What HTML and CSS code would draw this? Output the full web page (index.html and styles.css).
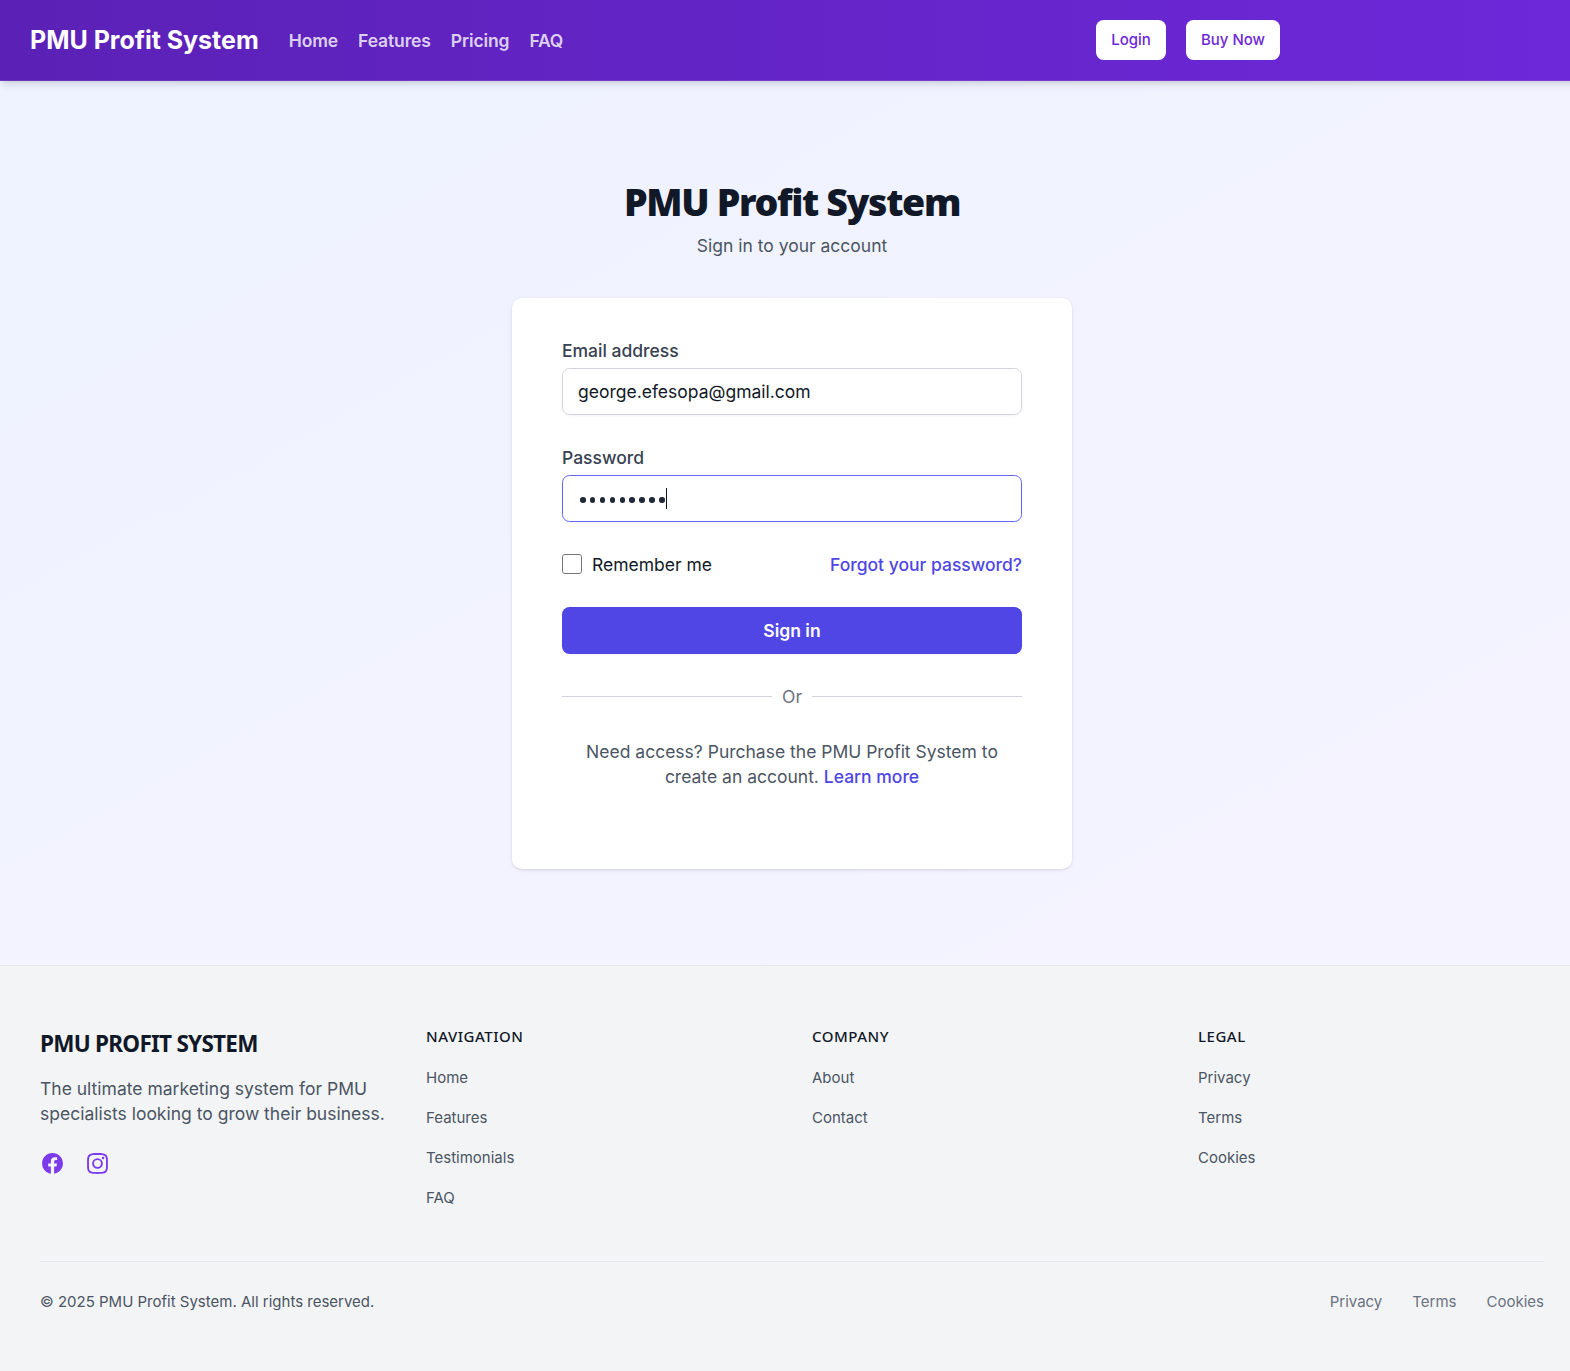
FILE: index.html
```html
<!DOCTYPE html>
<html lang="en">
<head>
<meta charset="utf-8">
<title>PMU Profit System</title>
<link rel="stylesheet" href="styles.css">
</head>
<body>
<div class="page">
  <header class="header">
    <div class="header-inner">
      <a class="brand">PMU Profit System</a>
      <nav class="nav"><a>Home</a><a>Features</a><a>Pricing</a><a>FAQ</a></nav>
      <div class="actions"><a class="action">Login</a><a class="action">Buy Now</a></div>
    </div>
  </header>
  <main class="main">
    <h1 class="title">PMU Profit System</h1>
    <p class="subtitle">Sign in to your account</p>
    <form class="card">
      <div class="field">
        <label class="label">Email address</label>
        <div class="input">george.efesopa@gmail.com</div>
      </div>
      <div class="field">
        <label class="label">Password</label>
        <div class="input focused">
          <span class="dots"><i></i><i></i><i></i><i></i><i></i><i></i><i></i><i></i><i></i></span><span class="caret"></span>
        </div>
      </div>
      <div class="options">
        <span class="remember"><span class="checkbox"></span>Remember me</span>
        <a class="link">Forgot your password?</a>
      </div>
      <div class="submit">Sign in</div>
      <div class="divider"><span class="or">Or</span></div>
      <p class="help">Need access? Purchase the PMU Profit System to<br>create an account. <a class="link">Learn more</a></p>
    </form>
  </main>
  <footer class="footer">
    <div class="columns">
      <section>
        <h3 class="footer-brand">PMU PROFIT SYSTEM</h3>
        <p class="about">The ultimate marketing system for PMU<br>specialists looking to grow their business.</p>
        <div class="social">
          <svg viewBox="0 0 24 24"><path d="M22 12c0-5.523-4.477-10-10-10S2 6.477 2 12c0 4.991 3.657 9.128 8.438 9.878v-6.987h-2.54V12h2.54V9.797c0-2.506 1.492-3.89 3.777-3.89 1.094 0 2.238.195 2.238.195v2.46h-1.26c-1.243 0-1.63.771-1.63 1.562V12h2.773l-.443 2.89h-2.33v6.988C18.343 21.128 22 16.991 22 12z"/></svg>
          <svg viewBox="0 0 24 24"><path fill-rule="evenodd" d="M12.315 2c2.43 0 2.784.013 3.808.06 1.064.049 1.791.218 2.427.465a4.902 4.902 0 011.772 1.153 4.902 4.902 0 011.153 1.772c.247.636.416 1.363.465 2.427.048 1.067.06 1.407.06 4.123v.08c0 2.643-.012 2.987-.06 4.043-.049 1.064-.218 1.791-.465 2.427a4.902 4.902 0 01-1.153 1.772 4.902 4.902 0 01-1.772 1.153c-.636.247-1.363.416-2.427.465-1.067.048-1.407.06-4.123.06h-.08c-2.643 0-2.987-.012-4.043-.06-1.064-.049-1.791-.218-2.427-.465a4.902 4.902 0 01-1.772-1.153 4.902 4.902 0 01-1.153-1.772c-.247-.636-.416-1.363-.465-2.427-.047-1.024-.06-1.379-.06-3.808v-.63c0-2.43.013-2.784.06-3.808.049-1.064.218-1.791.465-2.427a4.902 4.902 0 011.153-1.772A4.902 4.902 0 015.45 2.525c.636-.247 1.363-.416 2.427-.465C8.901 2.013 9.256 2 11.685 2h.63zm-.081 1.802h-.468c-2.456 0-2.784.011-3.807.058-.975.045-1.504.207-1.857.344-.467.182-.8.398-1.15.748-.35.35-.566.683-.748 1.15-.137.353-.3.882-.344 1.857-.047 1.023-.058 1.351-.058 3.807v.468c0 2.456.011 2.784.058 3.807.045.975.207 1.504.344 1.857.182.466.399.8.748 1.15.35.35.683.566 1.15.748.353.137.882.3 1.857.344 1.054.048 1.37.058 4.041.058h.08c2.597 0 2.917-.01 3.96-.058.976-.045 1.505-.207 1.858-.344.466-.182.8-.398 1.15-.748.35-.35.566-.683.748-1.15.137-.353.3-.882.344-1.857.048-1.055.058-1.37.058-4.041v-.08c0-2.597-.01-2.917-.058-3.96-.045-.976-.207-1.505-.344-1.858a3.097 3.097 0 00-.748-1.15 3.098 3.098 0 00-1.15-.748c-.353-.137-.882-.3-1.857-.344-1.023-.047-1.351-.058-3.807-.058zM12 6.865a5.135 5.135 0 110 10.27 5.135 5.135 0 010-10.27zm0 1.802a3.333 3.333 0 100 6.666 3.333 3.333 0 000-6.666zm5.338-3.205a1.2 1.2 0 110 2.4 1.2 1.2 0 010-2.4z"/></svg>
        </div>
      </section>
      <section>
        <h4 class="heading">NAVIGATION</h4>
        <ul class="list"><li>Home</li><li>Features</li><li>Testimonials</li><li>FAQ</li></ul>
      </section>
      <section>
        <h4 class="heading">COMPANY</h4>
        <ul class="list"><li>About</li><li>Contact</li></ul>
      </section>
      <section>
        <h4 class="heading">LEGAL</h4>
        <ul class="list"><li>Privacy</li><li>Terms</li><li>Cookies</li></ul>
      </section>
    </div>
    <div class="legal">
      <span>© 2025 PMU Profit System. All rights reserved.</span>
      <nav class="legal-links"><a>Privacy</a><a>Terms</a><a>Cookies</a></nav>
    </div>
  </footer>
</div>
</body>
</html>
```
FILE: styles.css
```css
*{box-sizing:border-box;margin:0;padding:0}
html,body{overflow:hidden}
body{font-family:Inter,"Liberation Sans",sans-serif;font-size:17.5px;line-height:25px;color:#111827}
.page{width:1584px;height:1371px;display:flex;flex-direction:column}
.header{height:81px;flex:none;position:relative;background:linear-gradient(90deg,#5b21b6,#6d28d9);border-bottom:1px solid rgba(255,255,255,.1);box-shadow:0 5px 7.5px -1px rgba(0,0,0,.1),0 2.5px 5px -2.5px rgba(0,0,0,.1)}
.header-inner{width:1280px;height:80px;padding-left:30px;display:flex;align-items:center}
.brand{font-size:25px;font-weight:700;letter-spacing:-.01px;line-height:35px;color:#fff}
.nav{display:flex;gap:20px;margin-left:30px;font-weight:600;letter-spacing:-.12px;color:rgba(255,255,255,.8)}
.actions{display:flex;gap:20px;margin-left:auto}
.action{height:40px;padding:0 15px;border-radius:7.5px;background:#fff;color:#6d28d9;font-size:15px;font-weight:500;line-height:40px}
.main{height:884px;flex:none;display:flex;flex-direction:column;align-items:center;padding-top:98px;background:linear-gradient(to bottom right,#eef3ff,#f5f3ff)}
.title{font-family:"Noto Sans",sans-serif;font-size:37.5px;line-height:45px;font-weight:900;letter-spacing:-1.35px;color:#111827}
.subtitle{margin-top:9px;color:#4b5563}
.card{width:560px;height:571px;margin-top:40px;padding:40px 50px;border-radius:10px;background:#fff;box-shadow:0 1px 3.75px rgba(0,0,0,.1),0 1px 2.5px -1px rgba(0,0,0,.1);display:flex;flex-direction:column;gap:30px}
.field{display:flex;flex-direction:column;gap:5px}
.label{font-weight:500;color:#374151}
.input{height:47px;border:1px solid #d1d5db;border-radius:7.5px;padding:0 15px;display:flex;align-items:center;box-shadow:0 1px 2.5px rgba(0,0,0,.05)}
.focused{border-color:#6366f1}
.dots{display:flex;gap:4.4px;padding:3px 0 0 2px}
.dots i{width:5.5px;height:5.5px;border-radius:50%;background:#1f2937}
.caret{width:1px;height:21px;margin-left:1px;background:#111827}
.options{display:flex;justify-content:space-between}
.remember{display:flex;align-items:center;gap:10px}
.checkbox{width:20px;height:20px;margin-bottom:2px;border:1px solid #767676;border-radius:3px;background:#fff}
.link{font-weight:500;color:#4f46e5}
.submit{height:47px;border-radius:7.5px;background:#4f46e5;color:#fff;font-weight:600;line-height:47px;text-align:center;box-shadow:0 1px 2.5px rgba(0,0,0,.05)}
.divider{display:flex;align-items:center;gap:10px;color:#6b7280}
.divider::before,.divider::after{content:"";height:1px;flex:1;background:#d1d5db}
.help{text-align:center;color:#4b5563}
.footer{flex:1;background:#f3f4f6;border-top:1px solid #e5e7eb;padding:60px 40px 0}
.columns{display:grid;grid-template-columns:repeat(4,1fr);gap:40px;height:235px}
.footer-brand{font-family:"Noto Sans",sans-serif;font-size:22.5px;line-height:35px;font-weight:700;letter-spacing:-.74px}
.about{margin-top:15px;color:#4b5563}
.social{display:flex;gap:20px;margin-top:25px}
.social svg{width:25px;height:25px;fill:#7c3aed}
.heading{font-family:"Noto Sans",sans-serif;font-size:15px;line-height:20px;font-weight:500;letter-spacing:.52px}
.list{list-style:none;margin-top:22px;display:flex;flex-direction:column;gap:20px;font-size:15px;line-height:20px;color:#4b5563}
.legal{border-top:1px solid #e5e7eb;padding-top:30px;display:flex;justify-content:space-between;font-size:15px;line-height:20px;color:#4b5563}
.legal-links{display:flex;gap:30px;color:#6b7280}
```
